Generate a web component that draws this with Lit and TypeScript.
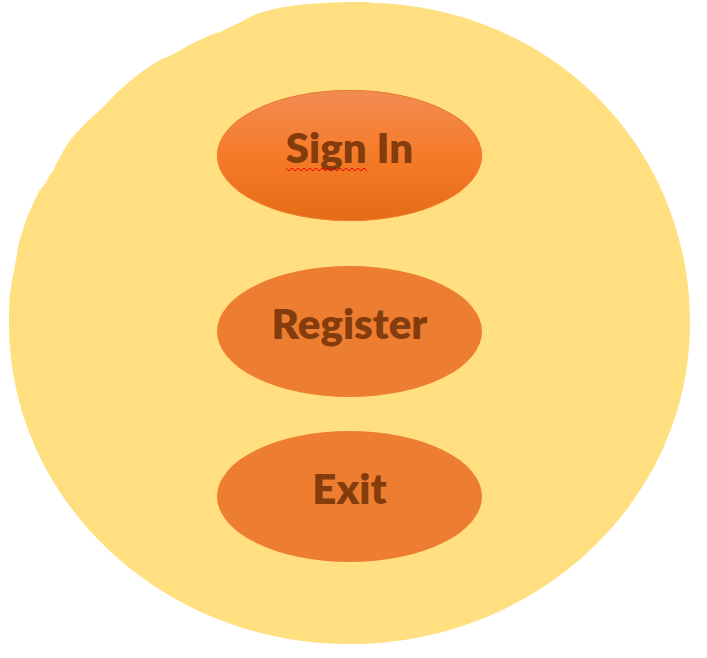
import { LitElement, html, css } from "lit";
import { customElement } from "lit/decorators.js";

@customElement("app-root")
export class AppRoot extends LitElement {
  static styles = css`
    :host {
      display: block;
      min-height: 100vh;
      background: #fff;
      font-family: Lato, "Open Sans", sans-serif;
    }
    .panel {
      position: relative;
      margin: 0 17px 0 9px;
      padding: 90px 0 82px;
    }
    .backdrop {
      position: absolute;
      inset: 2px 0 0;
      width: 100%;
      height: calc(100% - 2px);
    }
    .menu {
      position: relative;
      display: flex;
      flex-direction: column;
      align-items: center;
      gap: 34px;
    }
    .choice {
      box-sizing: border-box;
      width: 265px;
      height: 131px;
      padding: 0 0 18px;
      border: 0;
      border-radius: 50%;
      background: #ed7d31;
      color: #843c0c;
      font: inherit;
      font-size: 42px;
      font-weight: 800;
      line-height: 50px;
      cursor: pointer;
    }
    .primary {
      margin-bottom: 11px;
      background: linear-gradient(#f18c55, #f67b28 50%, #e56b17);
      box-shadow: inset 0 0 0 1px #ed7d31;
    }
    .flagged {
      position: relative;
      display: inline-block;
    }
    .squiggle {
      position: absolute;
      left: 0;
      bottom: 0;
      width: 100%;
      height: 5px;
    }
  `;

  render() {
    return html`
      <main class="panel">
        <svg
          class="backdrop"
          viewBox="9 2 681 642"
          preserveAspectRatio="none"
          aria-hidden="true"
        >
          <path
            fill="#ffdf80"
            d="M349.5 2 H366 L373 3 L387 3.5 C557 15 690 149 690 323 C690 500.300 537.600 644 349.500 644 C161.400 644 9 500.300 9 323 Q9 304 10 294 L12 281 L16 260 L19 242 L22 233 Q28 212 38 194 L39 191 L45 184 L50 175 L54 170 L56 164 L59 159 L65 148 Q70 139 82 127 L93 116 L97 113 L109 101 Q126 82 153 64 L162 59 L170 56 L191 44 L213 34 L220 32 L239 23 L254 15 Q284 3 349.500 2 Z"
          />
        </svg>
        <nav class="menu">
          <button class="choice primary" type="button">
            <span class="flagged"
              >Sign<svg class="squiggle" aria-hidden="true">
                <defs>
                  <pattern id="wave" width="6" height="5" patternUnits="userSpaceOnUse">
                    <path d="M-1 0 L0 1 L3 4 L6 1 L7 0" fill="none" stroke="#f00000" />
                  </pattern>
                </defs>
                <rect width="100%" height="5" fill="url(#wave)" /></svg
            ></span>
            In
          </button>
          <button class="choice" type="button">Register</button>
          <button class="choice" type="button">Exit</button>
        </nav>
      </main>
    `;
  }
}
